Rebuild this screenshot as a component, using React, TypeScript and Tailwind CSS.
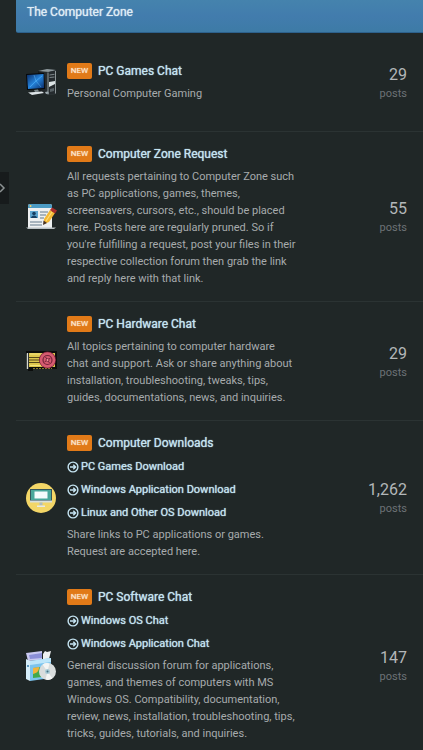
import type { ReactNode } from "react";

type Forum = {
  title: string;
  description: string;
  posts: string;
  links?: string[];
  icon: ReactNode;
};

function DesktopIcon() {
  return (
    <svg viewBox="0 0 32 32" className="h-8 w-8" aria-hidden="true">
      <defs>
        <linearGradient id="screen" x1="0" y1="0" x2="1" y2="1">
          <stop offset="0" stopColor="#0b2c66" />
          <stop offset="0.5" stopColor="#2584dc" />
          <stop offset="1" stopColor="#0a2a66" />
        </linearGradient>
        <linearGradient id="tower" x1="0" y1="0" x2="1" y2="0">
          <stop offset="0" stopColor="#15191b" />
          <stop offset="1" stopColor="#3b4346" />
        </linearGradient>
      </defs>
      <path d="M13 5 22 3l9 1v24l-7 1-11-3z" fill="url(#tower)" />
      <path d="m13 5 9-2 9 1-7 2z" fill="#8d989b" />
      <path d="M23 6 31 4.500v23l-7 1z" fill="#252b2e" />
      <path d="M23 6.500v22M30.500 5v22.500" stroke="#a9b4b5" strokeWidth="0.800" />
      <path d="m24.500 9 5-.7M24.500 11.500l5-.5" stroke="#7f898c" strokeWidth="1" />
      <path d="m24 16 6-1v3l-6 3z" fill="#dce4e5" />
      <path d="m25 23 4-1v3l-4 1z" fill="#586266" />
      <path d="m1 8 18-1 1 16-18 1z" fill="#05080c" />
      <path d="m2 9 16.500-1 .5 14-16 1z" fill="url(#screen)" />
      <path d="m9 9 2 6-6 6M11 15l6-5M11 15l5 6" stroke="#69c7ff" strokeWidth="0.600" fill="none" opacity="0.700" />
      <path d="m9 24 4-.5 1 2-4 .5z" fill="#7d898c" />
      <path d="m3 26.500 14-1 2 1.500-12 2z" fill="#dce3e6" />
      <path d="m20 26 3-.5 1 2-3 .5z" fill="#9eabb0" />
    </svg>
  );
}

function RequestIcon() {
  return (
    <svg viewBox="0 0 32 32" className="h-8 w-8" aria-hidden="true">
      <path d="M3 5a2 2 0 0 1 2-2h20a2 2 0 0 1 2 2v22H3z" fill="#eef0f1" />
      <path d="M3 7V5a2 2 0 0 1 2-2h20a2 2 0 0 1 2 2v2z" fill="#4b9bc4" />
      <circle cx="5.500" cy="5" r="1" fill="#f3d26a" />
      <path d="M5 10h8v7H5z" fill="#5fa6d0" />
      <circle cx="9" cy="12.500" r="1.800" fill="#163e62" />
      <path d="M6 17c0-3.500 6-3.500 6 0z" fill="#163e62" />
      <path d="M15 11h8M15 14h6M15 17h4M5 21h12M5 24h12" stroke="#62788a" strokeWidth="1" />
      <path d="M1 26.500h30l-2 1.500H3z" fill="#b9c0c3" />
      <path d="m19 18 6-9 5 3-6 9-5 2z" fill="#f4b834" />
      <path d="m21 20 6-9" stroke="#ffdc75" strokeWidth="1.200" />
      <path d="m25 9 2-2.500 5 3-2 3z" fill="#a82d2c" />
      <path d="m18.500 19.500 3.500 2.500-4 2z" fill="#493324" />
    </svg>
  );
}

function GraphicsCardIcon() {
  return (
    <svg viewBox="0 0 32 32" className="h-8 w-8" aria-hidden="true">
      <path d="M1 6h31v18H8v2H3V9H1z" fill="#0b0d0c" />
      <path d="M4 8h26v14H4z" fill="#ddc64c" />
      <path d="M2.500 8v16" stroke="#d8dad2" strokeWidth="1.400" />
      <path d="M4 12.500h12M4 15h12M4 17.500h12" stroke="#524719" strokeWidth="1" />
      <path d="M5 9h13M5 20.500h13" stroke="#f3e47f" strokeWidth="1" />
      <path d="M8 23.500h19" stroke="#8c7b2d" strokeWidth="1" strokeDasharray="2 1" />
      <circle cx="22.500" cy="15" r="8.500" fill="#711d34" />
      <circle cx="22.500" cy="15" r="7.800" fill="#d65b70" />
      <circle cx="22.500" cy="15" r="4.500" fill="none" stroke="#722239" strokeWidth="1.200" />
      <path d="m22.500 15-2-3M22.500 15l3-2M22.500 15l2 3M22.500 15l-3 2" stroke="#722239" strokeWidth="1" />
      <circle cx="22.500" cy="15" r="1.500" fill="#f08d96" stroke="#651d33" strokeWidth="0.700" />
    </svg>
  );
}

function MonitorIcon() {
  return (
    <svg viewBox="0 0 32 32" className="h-8 w-8" aria-hidden="true">
      <circle cx="16" cy="16" r="15" fill="#f3d667" />
      <path d="M5 7h22v13H5z" fill="#35545a" />
      <path d="M6 8h20v10H6z" fill="#49a79b" />
      <path d="M9.500 9.500h13v7h-13z" fill="#f4fbfc" />
      <path d="M5 18.500h22v2H5z" fill="#d7dfdf" />
      <path d="M14.500 20.500h3v3h-3z" fill="#aebdbe" />
      <path d="M12 23.500h8v1.500h-8z" fill="#e6eaea" />
    </svg>
  );
}

function SoftwareIcon() {
  return (
    <svg viewBox="0 0 32 32" className="h-8 w-8" aria-hidden="true">
      <path d="m1 3 16-2v9L3 11z" fill="#c9c9f1" />
      <path d="m4 5 13-2v5L5 9z" fill="#8b8fd8" />
      <path d="m18 4 2-3 2 1 4-1-2 8-6 1z" fill="#edf0f1" />
      <path d="m1 9 4 2v20l-4-2z" fill="#d6eefa" />
      <path d="m5 11 21-3v20L5 31z" fill="#7cc4ee" />
      <path d="m5 11 21-3v4L5 15z" fill="#bde6fa" />
      <path d="m8 18 9-1v10l-9 1z" fill="#42a94e" />
      <path d="m8 18 6-1c0 4-2 6-6 7z" fill="#f3b43b" />
      <circle cx="22.500" cy="21.500" r="8.500" fill="#d9dddd" />
      <path d="m22.500 21.500-5-7a8.500 8.500 0 0 1 7-1zM22.500 21.500l5 7a8.500 8.500 0 0 1-7 1z" fill="#f4f5f4" />
      <circle cx="22.500" cy="21.500" r="2.500" fill="#a8cbd7" />
      <circle cx="22.500" cy="21.500" r="1" fill="#477181" />
      <circle cx="3" cy="16" r="1" fill="#3379aa" />
    </svg>
  );
}

function ArrowCircle() {
  return (
    <svg viewBox="0 0 12 12" className="h-3 w-3 shrink-0" fill="none" stroke="currentColor" strokeWidth="1.400" aria-hidden="true">
      <circle cx="6" cy="6" r="4.900" />
      <path d="M3 6h5.500M6.300 3.800 8.600 6 6.300 8.200" />
    </svg>
  );
}

const forums: Forum[] = [
  {
    title: "PC Games Chat",
    description: "Personal Computer Gaming",
    posts: "29",
    icon: <DesktopIcon />,
  },
  {
    title: "Computer Zone Request",
    description:
      "All requests pertaining to Computer Zone such as PC applications, games, themes, screensavers, cursors, etc., should be placed here. Posts here are regularly pruned. So if you're fulfilling a request, post your files in their respective collection forum then grab the link and reply here with that link.",
    posts: "55",
    icon: <RequestIcon />,
  },
  {
    title: "PC Hardware Chat",
    description:
      "All topics pertaining to computer hardware chat and support. Ask or share anything about installation, troubleshooting, tweaks, tips, guides, documentations, news, and inquiries.",
    posts: "29",
    icon: <GraphicsCardIcon />,
  },
  {
    title: "Computer Downloads",
    links: ["PC Games Download", "Windows Application Download", "Linux and Other OS Download"],
    description: "Share links to PC applications or games. Request are accepted here.",
    posts: "1,262",
    icon: <MonitorIcon />,
  },
  {
    title: "PC Software Chat",
    links: ["Windows OS Chat", "Windows Application Chat"],
    description:
      "General discussion forum for applications, games, and themes of computers with MS Windows OS. Compatibility, documentation, review, news, installation, troubleshooting, tips, tricks, guides, tutorials, and inquiries.",
    posts: "147",
    icon: <SoftwareIcon />,
  },
];

function ForumRow({ forum }: { forum: Forum }) {
  return (
    <li className="flex min-h-[99px] items-center border-b border-[#2b3333] pt-[10px] pb-[14px] pl-[9px]">
      <div className="w-[42px] shrink-0 pt-1">{forum.icon}</div>
      <div className="min-w-0 flex-1">
        <h3 className="mb-[2px] flex h-6 items-center text-[12px] text-[#c5e4f2] text-shadow-[0_0_1px_currentColor]">
          <span className="mr-[6px] flex h-4 w-[25px] items-center justify-center rounded-[2px] bg-[#e17a18] text-[8px] text-[#fbe6d0]">
            NEW
          </span>
          <a href="#">{forum.title}</a>
        </h3>
        {forum.links && (
          <ul>
            {forum.links.map((link) => (
              <li key={link} className="h-[23px] text-[#c5e4f2]">
                <a href="#" className="flex items-center gap-[2px] text-[11px] leading-5 text-shadow-[0_0_1px_currentColor]">
                  <ArrowCircle />
                  {link}
                </a>
              </li>
            ))}
          </ul>
        )}
        <p className="text-[11px] leading-[17px] text-[#a7abad]">{forum.description}</p>
      </div>
      <div className="w-[124px] shrink-0 pt-[6px] pr-4 text-right">
        <div className="text-[16px] leading-5 text-[#b3b7b9]">{forum.posts}</div>
        <div className="text-[11px] leading-[17px] text-[#6d7276]">posts</div>
      </div>
    </li>
  );
}

export default function App() {
  return (
    <main className="relative h-screen overflow-hidden bg-[#202727] font-['Roboto',sans-serif]">
      <button
        type="button"
        aria-label="Open sidebar"
        className="absolute top-[172px] left-0 flex h-8 w-[9px] items-center justify-start bg-[#171b1c] text-[#8c9293]"
      >
        <svg viewBox="0 0 6 12" className="h-3 w-[6px]" fill="none" stroke="currentColor" strokeWidth="1.500" aria-hidden="true">
          <path d="m0 2 4 4-4 4" />
        </svg>
      </button>
      <section className="ml-4">
        <h2 className="h-[33px] rounded-bl-[2px] border-b border-[#2d618c] bg-linear-to-b from-[#4583ad] via-[#427cad] to-[#3d7ba6] pt-1 pl-[11px] text-[12px] leading-4 text-[#e0edf5] text-shadow-[0_0_1px_currentColor]">
          The Computer Zone
        </h2>
        <ul>
          {forums.map((forum) => (
            <ForumRow key={forum.title} forum={forum} />
          ))}
        </ul>
      </section>
    </main>
  );
}
